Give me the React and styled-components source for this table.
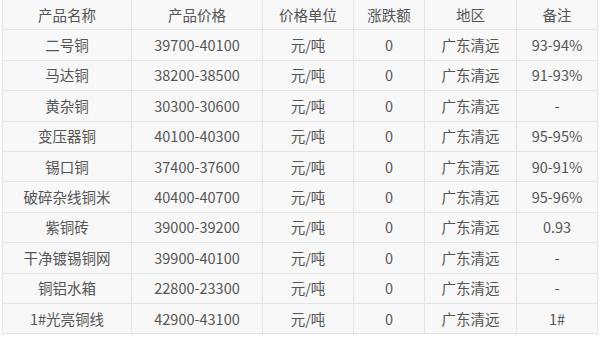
import styled, { createGlobalStyle } from 'styled-components';

const rows = [
  ['二号铜', '39700-40100', '元/吨', '0', '广东清远', '93-94%'],
  ['马达铜', '38200-38500', '元/吨', '0', '广东清远', '91-93%'],
  ['黄杂铜', '30300-30600', '元/吨', '0', '广东清远', '-'],
  ['变压器铜', '40100-40300', '元/吨', '0', '广东清远', '95-95%'],
  ['锡口铜', '37400-37600', '元/吨', '0', '广东清远', '90-91%'],
  ['破碎杂线铜米', '40400-40700', '元/吨', '0', '广东清远', '95-96%'],
  ['紫铜砖', '39000-39200', '元/吨', '0', '广东清远', '0.93'],
  ['干净镀锡铜网', '39900-40100', '元/吨', '0', '广东清远', '-'],
  ['铜铝水箱', '22800-23300', '元/吨', '0', '广东清远', '-'],
  ['1#光亮铜线', '42900-43100', '元/吨', '0', '广东清远', '1#'],
];

const heads = ['产品名称', '产品价格', '价格单位', '涨跌额', '地区', '备注'];
const widths = [129, 131, 91, 71, 92, 81];

const App = () => {
  return (
    <>
      <GlobalStyle />
      <Wrap>
        <PriceTable>
          <colgroup>
            {widths.map((w, i) => (
              <col key={i} style={{ width: w }} />
            ))}
          </colgroup>
          <thead>
            <tr>
              {heads.map((h) => (
                <HeadCell key={h}>{h}</HeadCell>
              ))}
            </tr>
          </thead>
          <tbody>
            {rows.map((r, i) => (
              <tr key={i}>
                {r.map((c, j) => (
                  <Cell key={j}>{c}</Cell>
                ))}
              </tr>
            ))}
          </tbody>
        </PriceTable>
      </Wrap>
    </>
  );
};

const GlobalStyle = createGlobalStyle`
  body {
    margin: 0;
    background: #ffffff;
    font-family: "Noto Sans CJK SC", "Noto Sans", sans-serif;
  }
`;

const Wrap = styled.div`
  padding: 0 0 0 2px;
  margin-top: -1px;
`;

const PriceTable = styled.table`
  border-collapse: collapse;
  table-layout: fixed;
  width: 596px;
  background: #f8f8f8;
`;

const Cell = styled.td`
  height: 29.4px;
  padding: 0;
  border: 1px solid #e4e4e4;
  text-align: center;
  vertical-align: middle;
  color: #555555;
  font-size: 14.5px;
  line-height: 20px;
  white-space: nowrap;
`;

const HeadCell = styled(Cell).attrs({ as: 'th' })`
  font-weight: normal;
`;

export default App;
